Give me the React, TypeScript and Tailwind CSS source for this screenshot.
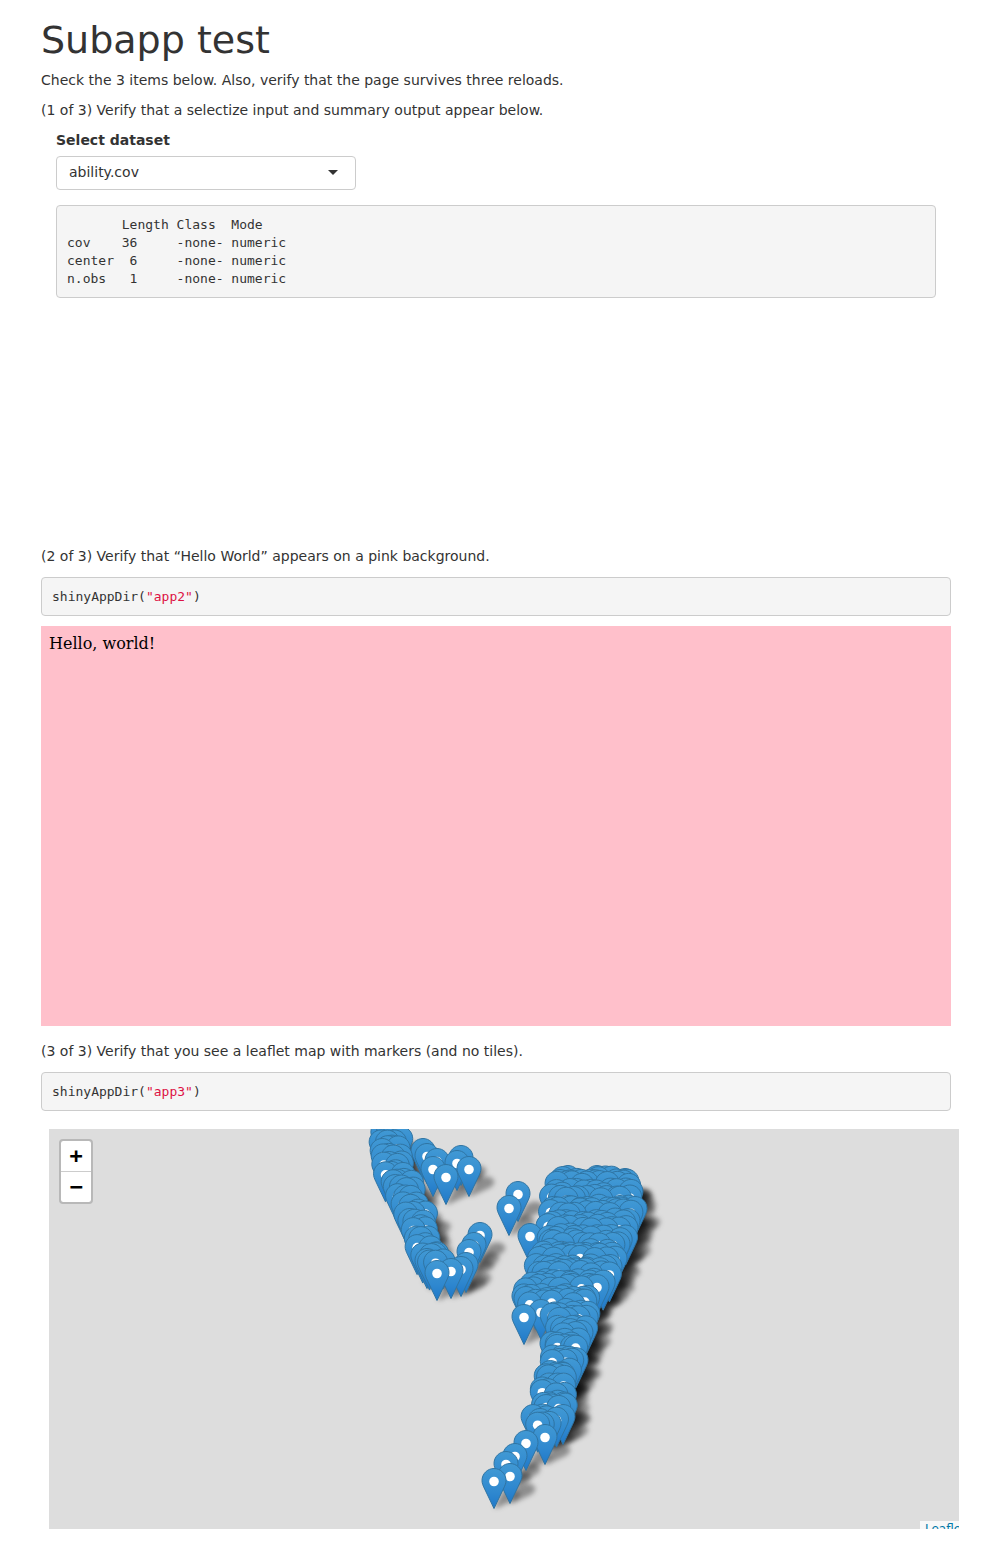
import React from "react";

type P = [number, number];

// Hole centres of the pins, in page coordinates.
const bands: [number, number, number][] = [
  [1181, 562, 630], [1185, 556, 633], [1189, 554, 635], [1194, 552, 635], [1199, 552, 635], [1204, 552, 635],
  [1209, 552, 634], [1214, 550, 633], [1219, 550, 632], [1224, 550, 630], [1229, 550, 628], [1234, 548, 627],
  [1239, 548, 625], [1244, 546, 623], [1249, 544, 621], [1254, 540, 619], [1259, 538, 615], [1264, 536, 611],
  [1269, 536, 609], [1274, 534, 607], [1279, 532, 603], [1284, 528, 601], [1289, 525, 599], [1294, 525, 597],
  [1299, 526, 595], [1304, 528, 593], [1309, 538, 591], [1314, 550, 589], [1319, 552, 589], [1324, 554, 587],
  [1329, 556, 586], [1334, 558, 585], [1339, 558, 584], [1344, 556, 583], [1349, 556, 582], [1354, 556, 581],
  [1359, 554, 577], [1364, 548, 575], [1369, 545, 573], [1374, 545, 571], [1379, 544, 569], [1384, 544, 565],
  [1389, 542, 563], [1394, 540, 565], [1399, 540, 569], [1404, 541, 569], [1409, 544, 565], [1414, 542, 561],
  [1419, 534, 557], [1424, 534, 555], [1429, 538, 551],
];

const leftBand: [number, number, number][] = [
  [1135, 382, 398], [1142, 382, 400], [1150, 381, 402], [1158, 382, 403], [1166, 384, 405],
  [1174, 385, 407], [1182, 392, 410], [1190, 394, 412], [1198, 398, 414], [1206, 404, 420],
  [1214, 406, 424], [1222, 410, 426], [1230, 414, 428], [1240, 416, 430], [1248, 418, 434],
  [1256, 424, 440], [1264, 430, 446],
];

function build(): P[] {
  let s = 12345;
  const rnd = () => {
    s = (s * 1103515245 + 12345) & 0x7fffffff;
    return s / 0x7fffffff;
  };
  const pts: P[] = [];
  bands.forEach(([y, a, b], i) => {
    if (i % 3 === 2) return;
    for (let x = a + (i % 2) * 3; x <= b; x += 7) {
      pts.push([x + (rnd() - 0.5) * 5, y + (rnd() - 0.5) * 5]);
    }
  });
  for (const [y, a, b] of leftBand) {
    for (let x = a; x <= b; x += 6) {
      pts.push([x + (rnd() - 0.5) * 3, y + (rnd() - 0.5) * 4]);
    }
  }
  const explicit: P[] = [
    [423, 1152], [427, 1157], [433, 1170], [437, 1162], [446, 1178], [457, 1164], [461, 1159], [469, 1170],
    [480, 1236], [469, 1253], [474, 1246], [466, 1266], [461, 1270], [451, 1272], [437, 1274],
    [435, 1256], [427, 1262],
    [518, 1195], [509, 1209], [530, 1237], [560, 1183], [568, 1179], [597, 1179], [625, 1182],
    [635, 1210], [620, 1209], [610, 1268], [597, 1288], [559, 1272],
    [524, 1318], [541, 1313], [526, 1300], [552, 1345], [563, 1376],
    [563, 1418], [545, 1438], [526, 1444], [540, 1422], [515, 1457], [506, 1465], [510, 1477], [494, 1482],
  ];
  pts.push(...explicit);
  pts.sort((p, q) => p[1] - q[1]);
  return pts;
}

const points = build();

function LeafletPins() {
  return (
    <svg className="absolute inset-0 block h-full w-full" viewBox="49 1129 910 400" aria-hidden="true">
      <defs>
        <linearGradient id="pinFill" x1="0" y1="0" x2="0" y2="1">
          <stop offset="0" stopColor="#4199d4" />
          <stop offset="0.6" stopColor="#2f88cf" />
          <stop offset="1" stopColor="#1f78c9" />
        </linearGradient>
        <filter id="shadowBlur" x="-50%" y="-50%" width="200%" height="200%">
          <feGaussianBlur stdDeviation="2.4" />
        </filter>
        <path
          id="pinShadow"
          d="M0 -1L8 -17C12 -21 20 -22 24 -18C27 -15 24 -11 20 -9L3 -1Z"
          fill="#000"
          fillOpacity="0.36"
          filter="url(#shadowBlur)"
        />
        <g id="pin">
          <path
            d="M0 -40.5C-6.6 -40.5 -12 -35.1 -12 -28.5C-12 -25.8 -11 -23.5 -9.8 -21L0 -0.5L9.8 -21C11 -23.5 12 -25.8 12 -28.5C12 -35.1 6.6 -40.5 0 -40.5Z"
            fill="url(#pinFill)"
            stroke="#2f74a3"
            strokeWidth="1"
          />
          <circle cx="0" cy="-27.5" r="4.8" fill="#fff" />
        </g>
      </defs>
      {points.map(([x, y], i) => (
        <use key={`s${i}`} href="#pinShadow" x={x} y={y + 27} />
      ))}
      {points.map(([x, y], i) => (
        <use key={`p${i}`} href="#pin" x={x} y={y + 27} />
      ))}
    </svg>
  );
}

function CodeBox({ app }: { app: string }) {
  return (
    <pre className="m-0 h-[39px] rounded border border-[#cccccc] bg-[#f5f5f5] px-[10px] pt-[10px] font-['DejaVu_Sans_Mono',monospace] text-[13px] leading-[18px] text-[#333333]">
      shinyAppDir(<span className="text-[#dd1144]">"{app}"</span>)
    </pre>
  );
}

export default function App() {
  return (
    <div className="h-[1545px] w-[992px] overflow-hidden bg-white font-['DejaVu_Sans',sans-serif] text-[14px] leading-5 text-[#333333]">
      <div className="relative mx-[41px] w-[910px]">
        <h1 className="m-0 pt-[22px] text-[38px] leading-[37.6px] font-normal">Subapp test</h1>
        <p className="mt-[10px] mb-[10px]">Check the 3 items below. Also, verify that the page survives three reloads.</p>
        <p className="mb-[10px]">(1 of 3) Verify that a selectize input and summary output appear below.</p>

        <div className="h-[416px] px-[15px]">
          <label className="mb-[6px] block font-bold">Select dataset</label>
          <div className="flex h-[34px] w-[300px] items-center justify-between rounded border border-[#cccccc] bg-white pr-[17px] pb-[2px] pl-3">
            <span>ability.cov</span>
            <span className="mt-[2px] h-0 w-0 border-x-[5px] border-t-[5px] border-x-transparent border-t-[#333333]" />
          </div>
          <pre className="mt-[15px] h-[93px] rounded border border-[#cccccc] bg-[#f5f5f5] px-[10px] pt-[10px] font-['DejaVu_Sans_Mono',monospace] text-[13px] leading-[18px] text-[#333333]">
            {"       Length Class  Mode   \ncov    36     -none- numeric\ncenter  6     -none- numeric\nn.obs   1     -none- numeric"}
          </pre>
        </div>

        <p className="mb-[11px]">(2 of 3) Verify that “Hello World” appears on a pink background.</p>
        <CodeBox app="app2" />
        <div className="mt-[10px] h-[400px] bg-[#ffc0cb] px-2 pt-[9px] font-['DejaVu_Serif',serif] text-[16px] leading-[18px] text-black">
          Hello, world!
        </div>

        <p className="mt-[15px] mb-[11px]">(3 of 3) Verify that you see a leaflet map with markers (and no tiles).</p>
        <CodeBox app="app3" />

        <div className="relative mt-[18px] ml-2 h-[400px] w-[910px] overflow-hidden bg-[#dddddd]">
          <LeafletPins />
          <div className="absolute top-[10px] left-[10px] w-[34px] rounded border-2 border-[#b8b8b8] bg-white bg-clip-padding font-['DejaVu_Sans_Mono',monospace] text-[22px] font-bold text-black">
            <div className="flex h-[31px] items-center justify-center rounded-t-sm border-b border-[#cccccc]">+</div>
            <div className="flex h-[30px] items-center justify-center rounded-b-sm">−</div>
          </div>
          <div className="absolute top-[392px] left-[871px] h-5 w-[60px] bg-white/80 pl-[5px] font-['DejaVu_Sans',sans-serif] text-[12px] leading-[17px] text-[#0078a8]">
            Leaflet
          </div>
        </div>
      </div>
    </div>
  );
}
